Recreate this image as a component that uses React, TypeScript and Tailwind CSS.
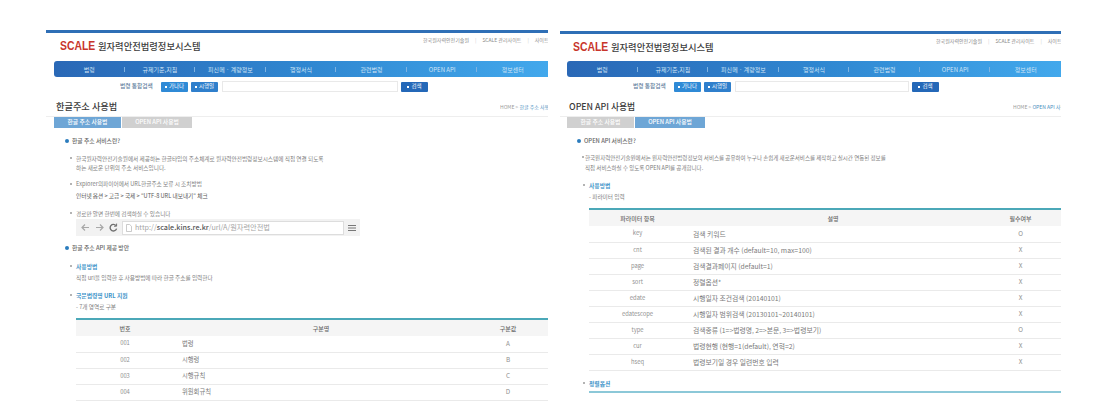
const font = { fontFamily: '"Noto Sans CJK KR", "Noto Sans", sans-serif' };

const menu = ["법령", "규제기준,지침", "피신메 · 계량정보", "행정서식", "관련법령", "OPEN API", "정보센터"];

function SmallButton({ label, className }: { label: string; className: string }) {
  return (
    <span className={`flex h-[10px] shrink-0 items-center justify-center gap-[2px] rounded-[1px] text-[5.5px] leading-none text-white ${className}`}>
      <span className="h-[2px] w-[2px] bg-white" />
      {label}
    </span>
  );
}

function Header({ rowClass, logoClass, labelClass, inputClass, navClass }: {
  rowClass: string;
  logoClass: string;
  labelClass: string;
  inputClass: string;
  navClass: string;
}) {
  return (
    <>
      <div className="h-[3px] bg-[#2f6fb6]" />
      <div className={`flex justify-between ${rowClass}`}>
        <div className={`flex items-start pt-[6px] ${logoClass}`}>
          <span className="w-[38px] origin-left scale-x-[0.8] text-[13px] font-bold leading-[14px] text-[#c8352b]" style={{ fontFamily: '"Liberation Sans", sans-serif' }}>
            SCALE
          </span>
          <span className="text-[9.3px] font-medium leading-[14px] text-[#3c3c3c]">원자력안전법령정보시스템</span>
        </div>
        <div className="flex w-[125px] shrink-0 gap-[6px] overflow-hidden whitespace-nowrap pt-[3px] text-[5px] leading-[8px] text-[#8a8a8a]">
          <span>한국원자력안전기술원</span>
          <span className="text-[#cccccc]">|</span>
          <span>SCALE 관리사이트</span>
          <span className="text-[#cccccc]">|</span>
          <span>사이트맵</span>
        </div>
      </div>
      <div className={`flex h-[16px] items-center rounded-l-[3px] bg-gradient-to-r from-[#2a68b6] via-[#2f86d0] to-[#42a8ec] text-[6px] text-[#cfe3f5] ${navClass}`}>
        {menu.map((item, i) => (
          <div key={item} className="relative flex flex-1 items-center justify-center whitespace-nowrap">
            {item}
            {i < menu.length - 1 && <span className="absolute right-0 h-[5px] w-px bg-[#7fb2e0]" />}
          </div>
        ))}
      </div>
      <div className={`mt-[4px] flex h-[11px] items-center ${labelClass}`}>
        <span className="w-[41px] shrink-0 whitespace-nowrap text-[5.7px] font-medium text-[#5e7d9c]">법령 통합검색</span>
        <SmallButton label="가나다" className="w-[27px] bg-[#2f8ad6]" />
        <SmallButton label="시행일" className="ml-[3px] w-[27px] bg-[#2f7fcc]" />
        <div className={`ml-[4px] h-[11px] shrink-0 border border-[#e9e9e9] bg-white ${inputClass}`} />
        <SmallButton label="검색" className="ml-[3px] w-[27px] bg-[#2468b8]" />
      </div>
    </>
  );
}

function TitleRow({ title, crumb, padClass, sizeClass }: { title: string; crumb: string; padClass: string; sizeClass: string }) {
  return (
    <div className={`flex h-[25px] justify-between border-b border-[#eeeeee] pt-[7px] ${padClass}`}>
      <span className={`font-medium leading-[15px] text-[#3a3a3a] ${sizeClass}`}>{title}</span>
      <span className="w-[48px] shrink-0 overflow-hidden whitespace-nowrap text-[5px] leading-[15px] text-[#9a9a9a]">
        HOME &gt; <span className="text-[#4a8fc0]">{crumb}</span>
      </span>
    </div>
  );
}

function Tabs({ active, padClass }: { active: number; padClass: string }) {
  const tabs = [
    { label: "한글 주소 사용법", width: "w-[67px]" },
    { label: "OPEN API 사용법", width: "w-[70px]" },
  ];
  return (
    <div className={`flex h-[11px] gap-[1px] ${padClass}`}>
      {tabs.map((t, i) => (
        <div key={t.label} className={`flex items-center justify-center whitespace-nowrap text-[5.8px] font-medium text-white ${t.width} ${i === active ? "bg-[#6ea6d6]" : "bg-[#d0d0d0]"}`}>
          {t.label}
        </div>
      ))}
    </div>
  );
}

function Heading({ children, className }: { children: string; className: string }) {
  return (
    <div className={`flex h-[10px] items-center gap-[3px] text-[5.8px] font-medium text-[#666666] ${className}`}>
      <span className="h-[4px] w-[4px] rounded-full bg-[#2b7cbd]" />
      {children}
    </div>
  );
}

function Dot({ className }: { className: string }) {
  return <span className={`absolute top-[3px] h-[2px] w-[2px] rounded-full bg-[#9a9a9a] ${className}`} />;
}

function Subhead({ children, className }: { children: string; className: string }) {
  return (
    <div className={`relative h-[10px] text-[5.8px] font-bold leading-[10px] text-[#3f95c9] ${className}`}>
      <Dot className="-left-[6px] bg-[#4a90c0]" />
      {children}
    </div>
  );
}

function DataTable({ widths, head, rows, bodyClass }: {
  widths: string[];
  head: string[];
  rows: string[][];
  bodyClass: string;
}) {
  return (
    <table className="w-full table-fixed border-collapse border-t-2 border-[#4ba8b8] text-[5.8px] text-[#7a7a7a]">
      <colgroup>
        {widths.map((w) => (
          <col key={w} className={w} />
        ))}
      </colgroup>
      <thead>
        <tr className="h-[17px] bg-[#f5f5f5]">
          {head.map((h) => (
            <th key={h} className="p-0 text-center text-[6px] font-medium text-[#666666]">{h}</th>
          ))}
        </tr>
      </thead>
      <tbody>
        {rows.map((r) => (
          <tr key={r[0]} className="h-[16px] border-b border-[#eaeaea]">
            <td className="p-0 text-center text-[#909090]">{r[0]}</td>
            <td className={`p-0 pl-[7px] ${bodyClass}`}>{r[1]}</td>
            <td className="p-0 text-center text-[6.4px] text-[#909090]">{r[2]}</td>
          </tr>
        ))}
      </tbody>
    </table>
  );
}

function AddressBar() {
  return (
    <div className="flex h-[17px] w-[284px] items-center bg-[#f2f2f2] pl-[5px] pr-[4px] text-[#a8a8a8]">
      <svg width="38" height="11" viewBox="0 0 38 11" fill="none" stroke="currentColor" strokeWidth="1.2" className="shrink-0">
        <path d="M8 5.5H1M4 2.5l-3 3 3 3" />
        <path d="M15 5.5h7M19 2.5l3 3-3 3" />
        <path d="M35 3.6a3.3 3.3 0 1 0 .6 3" stroke="#6f6f6f" strokeWidth="1.4" />
        <path d="M35.6 1.6v2.6H33" stroke="#6f6f6f" strokeWidth="1" />
      </svg>
      <div className="ml-[3px] flex h-[14px] w-[222px] shrink-0 items-center border border-[#dddddd] bg-white pl-[3px] text-[7.2px] text-[#a5a5a5]">
        <svg width="6" height="8" viewBox="0 0 6 8" fill="none" stroke="#b5b5b5" strokeWidth="0.7" className="mr-[3px] shrink-0">
          <path d="M.5.5h3.2L5.5 2.3v5.2h-5z" />
        </svg>
        <span className="whitespace-nowrap">
          http://<span className="font-medium text-[#555555]">scale.kins.re.kr</span>/url/A/원자력안전법
        </span>
      </div>
      <svg width="8" height="6" viewBox="0 0 8 6" stroke="#777777" className="ml-auto shrink-0">
        <path d="M0 .5h8M0 3h8M0 5.5h8" />
      </svg>
    </div>
  );
}

function KoreanGuide() {
  return (
    <section className="h-[403px] w-[502px] shrink-0 overflow-hidden pt-[30px]" style={font}>
      <Header
        rowClass="h-[28px]"
        logoClass="pl-[14px]"
        labelClass="pl-[74px]"
        inputClass="w-[176px]"
        navClass="ml-[8px]"
      />
      <TitleRow title="한글주소 사용법" crumb="한글 주소 사용법" padClass="pl-[10px]" sizeClass="text-[9.2px]" />
      <Tabs active={0} padClass="pl-[8px]" />
      <Heading className="ml-[19px] mt-[8px]">한글 주소 서비스란?</Heading>
      <div className="ml-[30px] whitespace-nowrap text-[5.65px] text-[#7d7d7d]">
        <div className="relative mt-[8px] leading-[9px]">
          <Dot className="-left-[6px]" />
          한국원자력안전기술원에서 제공하는 한글타입의 주소체계로 원자력안전법령정보시스템에 직접 연결 되도록
          <br />
          하는 새로운 단위의 주소 서비스입니다.
        </div>
        <div className="relative mt-[6px] leading-[12px]">
          <Dot className="-left-[6px] top-[5px]" />
          Explorer의파이어에서 URL한글주소 보류 시 조치방법
          <br />
          <span className="text-[#555555]">인터넷 옵션 &gt; 고급 &gt; 국제 &gt; "UTF-8 URL 내보내기" 체크</span>
        </div>
        <div className="relative mt-[7px] leading-[10px]">
          <Dot className="-left-[6px]" />
          경로만 알면 한번에 검색하실 수 있습니다
        </div>
        <AddressBar />
      </div>
      <Heading className="ml-[19px] mt-[7px]">한글 주소 API 제공 방안</Heading>
      <div className="ml-[30px] whitespace-nowrap">
        <Subhead className="mt-[9px]">사용방법</Subhead>
        <div className="mt-[1px] text-[5.65px] leading-[10px] text-[#7d7d7d]">직접 url을 입력한 후 사용방법에 따라 한글 주소를 입력한다</div>
        <Subhead className="mt-[8px]">국문법령명 URL 지원</Subhead>
        <div className="mt-[1px] text-[5.65px] leading-[10px] text-[#7d7d7d]">- 7개 영역로 구분</div>
        <div className="mt-[6px]">
          <DataTable
            widths={["w-[98px]", "w-[294px]", "w-[80px]"]}
            head={["번호", "구분명", "구분값"]}
            bodyClass="text-[6.3px] pl-[8px]"
            rows={[
              ["001", "법령", "A"],
              ["002", "시행령", "B"],
              ["003", "시행규칙", "C"],
              ["004", "위원회규칙", "D"],
            ]}
          />
        </div>
      </div>
    </section>
  );
}

function ApiGuide() {
  return (
    <section className="h-[403px] w-[501px] shrink-0 overflow-hidden pt-[31px]" style={font}>
      <Header
        rowClass="h-[27px]"
        logoClass="pl-[13px]"
        labelClass="pl-[73px]"
        inputClass="w-[174px]"
        navClass="ml-[7px]"
      />
      <TitleRow title="OPEN API 사용법" crumb="OPEN API 사용법" padClass="pl-[9px]" sizeClass="text-[8.8px]" />
      <Tabs active={1} padClass="pl-[7px]" />
      <Heading className="ml-[17px] mt-[8px]">OPEN API 서비스란?</Heading>
      <div className="ml-[29px] whitespace-nowrap">
        <div className="relative -ml-[4px] mt-[7px] text-[5.5px] leading-[10px] text-[#7d7d7d]">
          <Dot className="-left-[3px]" />
          한국원자력안전기술원에서는 원자력안전법령정보의 서비스를 공유하여 누구나 손쉽게 새로운서비스를 제작하고 실시간 연동된 정보를
          <br />
          직접 서비스하실 수 있도록 OPEN API를 공개합니다.
        </div>
        <Subhead className="mt-[8px]">사용방법</Subhead>
        <div className="mt-[1px] text-[5.65px] leading-[10px] text-[#7d7d7d]">- 파라미터 입력</div>
        <div className="mt-[6px]">
          <DataTable
            widths={["w-[97px]", "w-[294px]", "w-[81px]"]}
            head={["파라미터 항목", "설명", "필수여부"]}
            bodyClass="text-[6.8px]"
            rows={[
              ["key", "검색 키워드", "O"],
              ["cnt", "검색된 결과 개수 (default=10, max=100)", "X"],
              ["page", "검색결과페이지 (default=1)", "X"],
              ["sort", "정렬옵션*", "X"],
              ["edate", "시행일자 조건검색 (20140101)", "X"],
              ["edatescope", "시행일자 범위검색 (20130101~20140101)", "X"],
              ["type", "검색종류 (1=>법령명, 2=>본문, 3=>법령보기)", "O"],
              ["cur", "법령현행 (현행=1(default), 연혁=2)", "X"],
              ["hseq", "법령보기일 경우 일련번호 입력", "X"],
            ]}
          />
        </div>
        <Subhead className="mt-[8px]">정렬옵션</Subhead>
        <div className="mt-[2px] h-[2px] bg-[#8cc8d8]" />
      </div>
    </section>
  );
}

export default function App() {
  return (
    <div className="flex h-[403px] w-[1098px] items-start gap-[12px] overflow-hidden bg-white pl-[46px]">
      <KoreanGuide />
      <ApiGuide />
    </div>
  );
}
